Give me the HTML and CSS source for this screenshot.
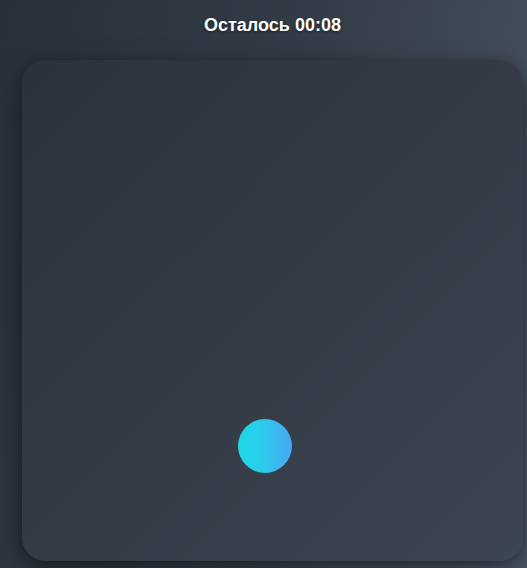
FILE: index.html
```html
<!DOCTYPE html>
<html lang="ru">
<head>
<meta charset="utf-8">
<link rel="stylesheet" href="styles.css">
</head>
<body>
<div class="page">
  <div class="header">Осталось 00:08</div>
  <div class="board">
    <div class="dot"></div>
  </div>
</div>
</body>
</html>
```
FILE: styles.css
```css
html, body {
  margin: 0;
  height: 100%;
  overflow: hidden;
}
body {
  background: linear-gradient(105deg, #29303a 0%, #333b46 45%, #434d5b 80%, #4b5665 100%);
  font-family: "Liberation Sans", Arial, sans-serif;
}
.page {
  display: flex;
  flex-direction: column;
  padding-left: 22px;
}
.header {
  height: 50px;
  display: flex;
  align-items: center;
  justify-content: center;
  width: 501px;
  color: #ffffff;
  font-weight: bold;
  font-size: 18px;
  text-shadow: 0 1px 3px rgba(0,0,0,0.5);
  box-sizing: border-box;
}
.board {
  position: relative;
  margin-top: 10px;
  width: 501px;
  height: 501px;
  border-radius: 24px;
  background: linear-gradient(135deg, #2c323b 0%, #343b45 50%, #3c4552 100%);
  box-shadow: 0 10px 30px rgba(0,0,0,0.4), 0 2px 8px rgba(0,0,0,0.2);
}
.dot {
  position: absolute;
  left: 216px;
  top: 359px;
  width: 54px;
  height: 54px;
  border-radius: 50%;
  background: linear-gradient(90deg, #1fd8e6 0%, #2ccbeb 45%, #4aa6f2 100%);
}
```
